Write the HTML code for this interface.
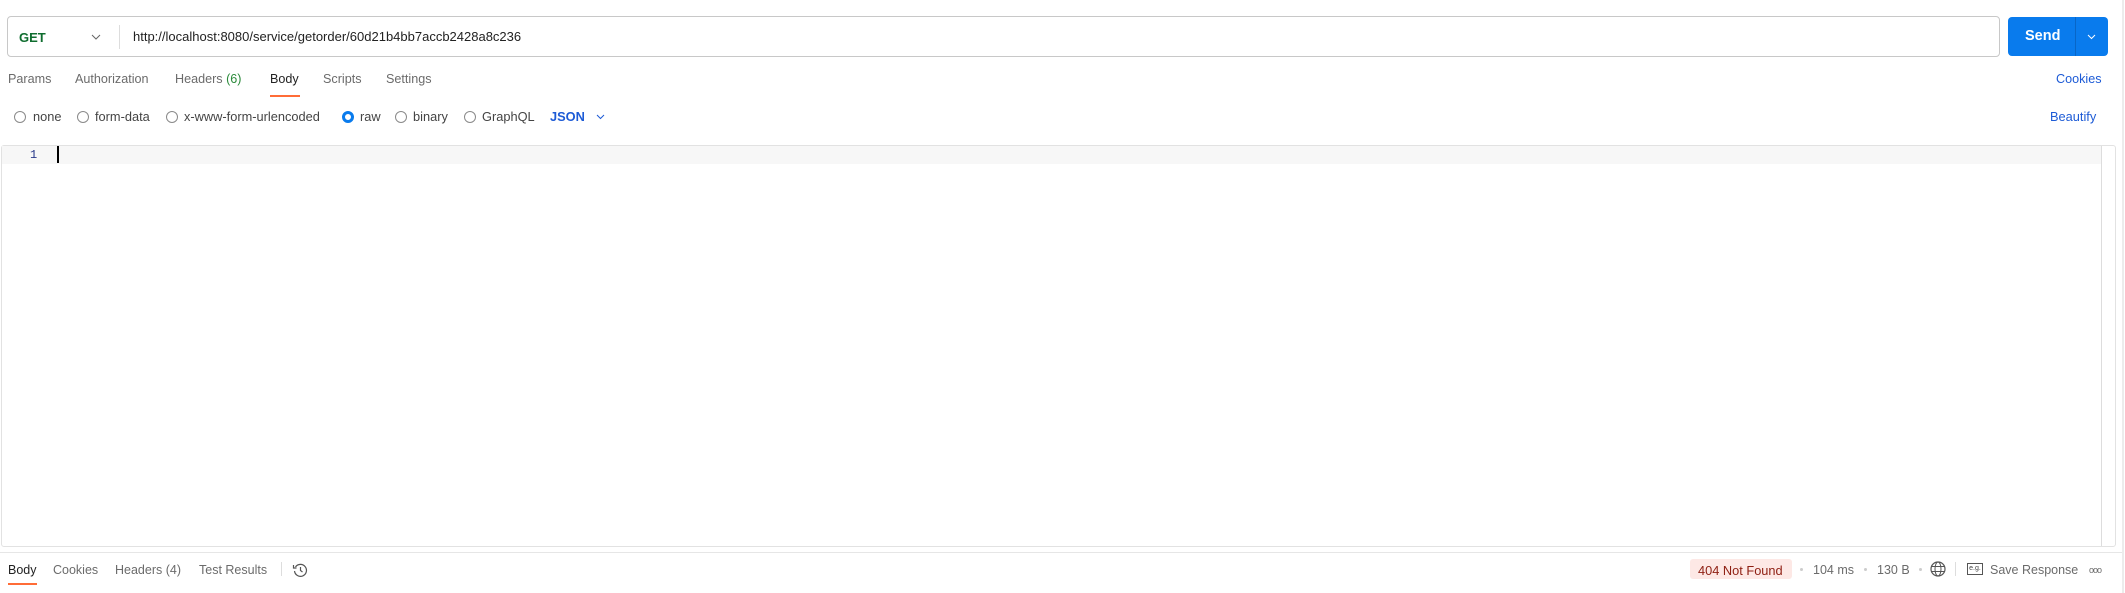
<!DOCTYPE html>
<html><head><meta charset="utf-8"><style>
*{margin:0;padding:0;box-sizing:border-box}
body{width:2125px;height:593px;background:#fff;font-family:"Liberation Sans",sans-serif;font-size:12.5px;color:#6b6b6b;position:relative;overflow:hidden}
.a{position:absolute;white-space:nowrap}
.url{left:7px;top:16px;width:1993px;height:41px;border:1px solid #c8c8c8;border-radius:4px}
.send{left:2008px;top:17px;width:100px;height:39px;background:#097bed;border-radius:4px}
.rad{position:absolute;width:12px;height:12px;border:1px solid #8a8a8a;border-radius:50%;top:111px}
.t{top:72px;font-size:12.6px}
.r{top:109px;font-size:12.8px}
.b{top:563px}
</style></head><body>
<div class="a" style="top:0;width:2px;height:593px;background:#ececec;left:2122px"></div>
<div class="a url"></div>
<div class="a" style="left:19px;top:30px;font-weight:bold;color:#0f6d2f;font-size:13px">GET</div>
<svg class="a" style="left:91px;top:34px" width="10" height="6"><path d="M1 1l4 4 4-4" stroke="#666" fill="none"/></svg>
<div class="a" style="left:119px;top:25px;width:1px;height:24px;background:#ddd"></div>
<div class="a" style="left:133px;top:29px;color:#222;font-size:13px">http://localhost:8080/service/getorder/60d21b4bb7accb2428a8c236</div>
<div class="a send"></div>
<div class="a" style="left:2025px;top:28px;color:#fff;font-weight:bold;font-size:14.5px">Send</div>
<div class="a" style="left:2075px;top:17px;width:1px;height:39px;background:#0866c7"></div>
<svg class="a" style="left:2087px;top:34px" width="9" height="6"><path d="M1 1l3.5 3.5L8 1" stroke="#fff" fill="none"/></svg>

<div class="a t" style="left:8px">Params</div>
<div class="a t" style="left:75px">Authorization</div>
<div class="a t" style="left:175px">Headers <span style="color:#2a8a3a">(6)</span></div>
<div class="a t" style="left:270px;color:#222">Body</div>
<div class="a" style="left:270px;top:95px;width:30px;height:2px;background:#ff6c37"></div>
<div class="a t" style="left:323px">Scripts</div>
<div class="a t" style="left:386px">Settings</div>
<div class="a t" style="left:2056px;color:#1d5bd6">Cookies</div>

<div class="rad" style="left:14px"></div><div class="a r" style="left:33px;color:#444">none</div>
<div class="rad" style="left:77px"></div><div class="a r" style="left:95px;color:#444">form-data</div>
<div class="rad" style="left:166px"></div><div class="a r" style="left:184px;color:#444">x-www-form-urlencoded</div>
<div class="rad" style="left:342px;border:3.5px solid #097bed"></div><div class="a r" style="left:360px;color:#444">raw</div>
<div class="rad" style="left:395px"></div><div class="a r" style="left:413px;color:#444">binary</div>
<div class="rad" style="left:464px"></div><div class="a r" style="left:482px;color:#444">GraphQL</div>
<div class="a r" style="left:550px;color:#1d5bd6;font-weight:bold">JSON</div>
<svg class="a" style="left:596px;top:114px" width="9" height="6"><path d="M1 1l3.5 3.5L8 1" stroke="#1d5bd6" fill="none"/></svg>
<div class="a r" style="left:2050px;color:#1d5bd6">Beautify</div>

<div class="a" style="left:1px;top:145px;width:2115px;height:402px;border:1px solid #e2e2e2;border-radius:3px"></div>
<div class="a" style="left:2px;top:146px;width:2099px;height:18px;background:#f7f7f7"></div>
<div class="a" style="left:2101px;top:146px;width:1px;height:400px;background:#ddd"></div>
<div class="a" style="left:30px;top:148px;color:#2a3a8a;font-family:'Liberation Mono',monospace;font-size:12px">1</div>
<div class="a" style="left:57px;top:146px;width:2px;height:17px;background:#000"></div>

<div class="a" style="left:0;top:552px;width:2122px;height:1px;background:#e6e6e6"></div>
<div class="a b" style="left:8px;color:#222">Body</div>
<div class="a" style="left:8px;top:583px;width:29px;height:2px;background:#ff6c37"></div>
<div class="a b" style="left:53px">Cookies</div>
<div class="a b" style="left:115px">Headers (4)</div>
<div class="a b" style="left:199px">Test Results</div>
<div class="a" style="left:281px;top:562px;width:1px;height:14px;background:#ddd"></div>
<svg class="a" style="left:292px;top:562px" width="16" height="16"><path d="M3.5 5A6 6 0 1 1 2.5 9" stroke="#555" fill="none" stroke-width="1.2"/><path d="M1.5 3v3h3" stroke="#555" fill="none" stroke-width="1.2"/><path d="M8.5 5v3.5l2 1.5" stroke="#555" fill="none" stroke-width="1.2"/></svg>

<div class="a" style="left:1690px;top:559px;width:102px;height:20px;background:#fde8e5;border-radius:3px"></div>
<div class="a b" style="left:1698px;color:#8e1f12;font-size:12.8px">404 Not Found</div>
<div class="a" style="left:1800px;top:568px;width:3px;height:3px;border-radius:50%;background:#ccc"></div>
<div class="a b" style="left:1813px">104 ms</div>
<div class="a" style="left:1864px;top:568px;width:3px;height:3px;border-radius:50%;background:#ccc"></div>
<div class="a b" style="left:1877px">130 B</div>
<div class="a" style="left:1919px;top:568px;width:3px;height:3px;border-radius:50%;background:#ccc"></div>
<svg class="a" style="left:1930px;top:561px" width="16" height="16"><circle cx="8" cy="8" r="7" stroke="#555" fill="none" stroke-width="1.2"/><ellipse cx="8" cy="8" rx="3" ry="7" stroke="#555" fill="none"/><path d="M1.5 5.5h13M1.5 10.5h13" stroke="#555"/></svg>
<div class="a" style="left:1955px;top:562px;width:1px;height:14px;background:#ddd"></div>
<div class="a" style="left:1967px;top:563px;width:16px;height:12px;border:1px solid #555;font-size:7px;line-height:10px;text-align:center;color:#444">e.g.</div>
<div class="a b" style="left:1990px">Save Response</div>
<div class="a b" style="left:2089px;font-size:9px;top:565px;letter-spacing:-1px">ooo</div>
</body></html>
